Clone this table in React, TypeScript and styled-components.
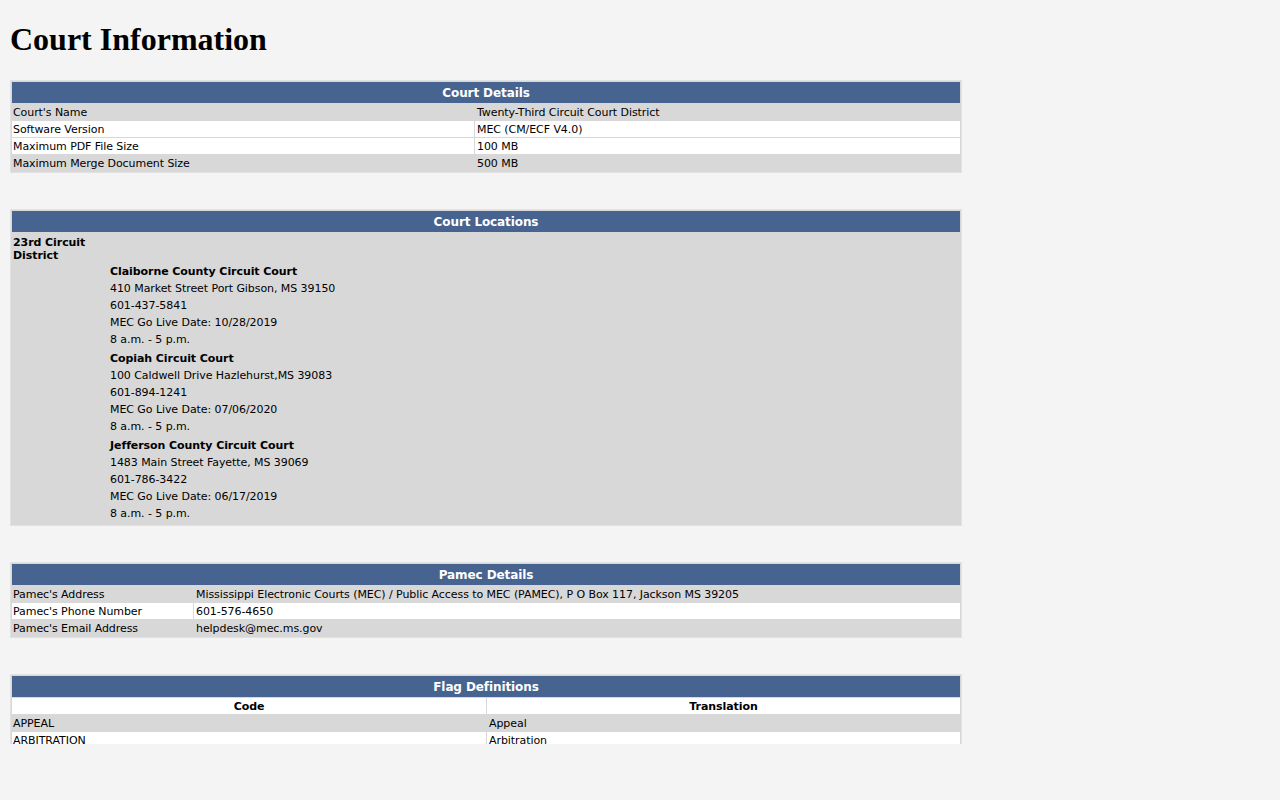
import React from "react";
import styled, { createGlobalStyle } from "styled-components";

const GlobalStyle = createGlobalStyle`
  html, body {
    margin: 0;
    padding: 0;
    background: #f4f4f4;
  }
  body {
    font-family: "DejaVu Sans", Verdana, sans-serif;
    color: #000;
  }
`;

const Viewport = styled.div`
  height: 744px;
  overflow: hidden;
  background: #f4f4f4;
`;

const Page = styled.div`
  padding: 1px 318px 0 10px;
`;

const Title = styled.h1`
  font-family: "Liberation Serif", "Times New Roman", serif;
  font-size: 32px;
  font-weight: bold;
  margin: 20px 0 22px 0;
  line-height: 37px;
`;

const Table = styled.table`
  width: 952px;
  border: 1px solid #e2e2e2;
  border-spacing: 1px;
  background: #d8d8d8;
  margin: 0 0 36px 0;
  font-size: 11px;
  letter-spacing: -0.07px;
  line-height: 14px;
`;

const HeaderCell = styled.th`
  background: #46648f;
  color: #fff;
  font-weight: bold;
  font-size: 12px;
  letter-spacing: -0.1px;
  text-align: center;
  padding: 4px 2px 3px;
  height: 14px;
`;

const ColHeadCell = styled.th`
  background: #fff;
  font-weight: bold;
  text-align: center;
  padding: 2px 2px 0;
`;

const Label = styled.td<{ $white?: boolean; $w: number }>`
  background: ${(p) => (p.$white ? "#ffffff" : "#d8d8d8")};
  padding: 2px 2px 0 1px;
  width: ${(p) => p.$w}px;
  vertical-align: top;
  text-align: left;
  white-space: nowrap;
`;

const Value = styled.td<{ $white?: boolean }>`
  background: ${(p) => (p.$white ? "#ffffff" : "#d8d8d8")};
  padding: 2px 2px 0 2px;
  vertical-align: top;
  text-align: left;
  white-space: nowrap;
`;

const DistrictCell = styled.td`
  width: 92px;
  padding: 3px 2px 0 1px;
  font-weight: bold;
  line-height: 13px;
  vertical-align: top;
`;

const BlankCell = styled.td`
  padding: 0;
`;

const CourtList = styled.td`
  padding: 0 0 2px 2px;
  display: flex;
  flex-direction: column;
  gap: 2px;
`;

const CourtBlock = styled.div`
  display: flex;
  flex-direction: column;
`;

const CourtLine = styled.div<{ $bold?: boolean }>`
  line-height: 17px;
  font-weight: ${(p) => (p.$bold ? "bold" : "normal")};
`;

type Row = { k: string; v: string; white?: boolean };

const courtDetails: Row[] = [
  { k: "Court's Name", v: "Twenty-Third Circuit Court District" },
  { k: "Software Version", v: "MEC (CM/ECF V4.0)", white: true },
  { k: "Maximum PDF File Size", v: "100 MB", white: true },
  { k: "Maximum Merge Document Size", v: "500 MB" },
];

const pamecDetails: Row[] = [
  {
    k: "Pamec's Address",
    v: "Mississippi Electronic Courts (MEC) / Public Access to MEC (PAMEC), P O Box 117, Jackson MS 39205",
  },
  { k: "Pamec's Phone Number", v: "601-576-4650", white: true },
  { k: "Pamec's Email Address", v: "helpdesk@mec.ms.gov" },
];

const courts = [
  {
    name: "Claiborne County Circuit Court",
    address: "410 Market Street Port Gibson, MS 39150",
    phone: "601-437-5841",
    live: "MEC Go Live Date: 10/28/2019",
    hours: "8 a.m. - 5 p.m.",
  },
  {
    name: "Copiah Circuit Court",
    address: "100 Caldwell Drive Hazlehurst,MS 39083",
    phone: "601-894-1241",
    live: "MEC Go Live Date: 07/06/2020",
    hours: "8 a.m. - 5 p.m.",
  },
  {
    name: "Jefferson County Circuit Court",
    address: "1483 Main Street Fayette, MS 39069",
    phone: "601-786-3422",
    live: "MEC Go Live Date: 06/17/2019",
    hours: "8 a.m. - 5 p.m.",
  },
];

const flags: Row[] = [
  { k: "APPEAL", v: "Appeal" },
  { k: "ARBITRATION", v: "Arbitration", white: true },
  { k: "CONSOLIDATED", v: "Consolidated" },
];

function KVTable({ title, rows, labelWidth }: { title: string; rows: Row[]; labelWidth: number }) {
  return (
    <Table>
      <thead>
        <tr>
          <HeaderCell colSpan={2}>{title}</HeaderCell>
        </tr>
      </thead>
      <tbody>
        {rows.map((r) => (
          <tr key={r.k}>
            <Label $white={r.white} $w={labelWidth}>
              {r.k}
            </Label>
            <Value $white={r.white}>{r.v}</Value>
          </tr>
        ))}
      </tbody>
    </Table>
  );
}

export default function App() {
  return (
    <Viewport>
      <GlobalStyle />
      <Page>
        <Title>Court Information</Title>

        <KVTable title="Court Details" rows={courtDetails} labelWidth={459} />

        <Table>
          <thead>
            <tr>
              <HeaderCell colSpan={2}>Court Locations</HeaderCell>
            </tr>
          </thead>
          <tbody>
            <tr>
              <DistrictCell>23rd Circuit District</DistrictCell>
              <BlankCell />
            </tr>
            <tr>
              <BlankCell />
              <CourtList>
                {courts.map((c) => (
                  <CourtBlock key={c.name}>
                    <CourtLine $bold>{c.name}</CourtLine>
                    <CourtLine>{c.address}</CourtLine>
                    <CourtLine>{c.phone}</CourtLine>
                    <CourtLine>{c.live}</CourtLine>
                    <CourtLine>{c.hours}</CourtLine>
                  </CourtBlock>
                ))}
              </CourtList>
            </tr>
          </tbody>
        </Table>

        <KVTable title="Pamec Details" rows={pamecDetails} labelWidth={178} />

        <Table>
          <thead>
            <tr>
              <HeaderCell colSpan={2}>Flag Definitions</HeaderCell>
            </tr>
            <tr>
              <ColHeadCell>Code</ColHeadCell>
              <ColHeadCell>Translation</ColHeadCell>
            </tr>
          </thead>
          <tbody>
            {flags.map((r) => (
              <tr key={r.k}>
                <Label $white={r.white} $w={471}>
                  {r.k}
                </Label>
                <Value $white={r.white}>{r.v}</Value>
              </tr>
            ))}
          </tbody>
        </Table>
      </Page>
    </Viewport>
  );
}
